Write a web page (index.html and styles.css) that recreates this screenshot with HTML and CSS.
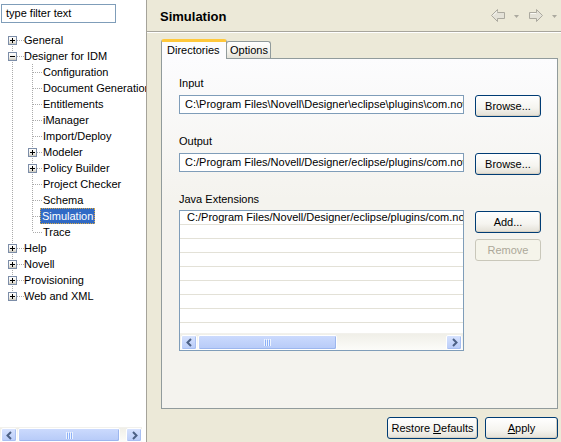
FILE: index.html
```html
<!DOCTYPE html>
<html>
<head>
<meta charset="utf-8">
<link rel="stylesheet" href="styles.css">
</head>
<body>
<div class="app">
  <div class="left">
    <div class="filter"><div class="filter-box">type filter text</div></div>
    <div class="tree">
      <div class="row"><span class="c c1 f"><svg class="exp" width="9" height="9" viewBox="0 0 9 9"><rect x="0.5" y="0.5" width="8" height="8" fill="url(#g)" stroke="#7C8DA8"/><rect x="2" y="4" width="5" height="1" fill="#000"/><rect x="4" y="2" width="1" height="5" fill="#000"/></svg></span><span class="txt">General</span></div>
      <div class="row"><span class="c c1 t"><svg class="exp" width="9" height="9" viewBox="0 0 9 9"><rect x="0.5" y="0.5" width="8" height="8" fill="url(#g)" stroke="#7C8DA8"/><rect x="2" y="4" width="5" height="1" fill="#000"/></svg></span><span class="txt">Designer for IDM</span></div>
      <div class="row"><span class="c c1 v"></span><span class="c c2 t"></span><span class="txt">Configuration</span></div>
      <div class="row"><span class="c c1 v"></span><span class="c c2 t"></span><span class="txt">Document Generation</span></div>
      <div class="row"><span class="c c1 v"></span><span class="c c2 t"></span><span class="txt">Entitlements</span></div>
      <div class="row"><span class="c c1 v"></span><span class="c c2 t"></span><span class="txt">iManager</span></div>
      <div class="row"><span class="c c1 v"></span><span class="c c2 t"></span><span class="txt">Import/Deploy</span></div>
      <div class="row"><span class="c c1 v"></span><span class="c c2 t"><svg class="exp" width="9" height="9" viewBox="0 0 9 9"><rect x="0.5" y="0.5" width="8" height="8" fill="url(#g)" stroke="#7C8DA8"/><rect x="2" y="4" width="5" height="1" fill="#000"/><rect x="4" y="2" width="1" height="5" fill="#000"/></svg></span><span class="txt">Modeler</span></div>
      <div class="row"><span class="c c1 v"></span><span class="c c2 t"><svg class="exp" width="9" height="9" viewBox="0 0 9 9"><rect x="0.5" y="0.5" width="8" height="8" fill="url(#g)" stroke="#7C8DA8"/><rect x="2" y="4" width="5" height="1" fill="#000"/><rect x="4" y="2" width="1" height="5" fill="#000"/></svg></span><span class="txt">Policy Builder</span></div>
      <div class="row"><span class="c c1 v"></span><span class="c c2 t"></span><span class="txt">Project Checker</span></div>
      <div class="row"><span class="c c1 v"></span><span class="c c2 t"></span><span class="txt">Schema</span></div>
      <div class="row"><span class="c c1 v"></span><span class="c c2 t"></span><span class="txt sel">Simulation</span></div>
      <div class="row"><span class="c c1 v"></span><span class="c c2 l"></span><span class="txt">Trace</span></div>
      <div class="row"><span class="c c1 t"><svg class="exp" width="9" height="9" viewBox="0 0 9 9"><rect x="0.5" y="0.5" width="8" height="8" fill="url(#g)" stroke="#7C8DA8"/><rect x="2" y="4" width="5" height="1" fill="#000"/><rect x="4" y="2" width="1" height="5" fill="#000"/></svg></span><span class="txt">Help</span></div>
      <div class="row"><span class="c c1 t"><svg class="exp" width="9" height="9" viewBox="0 0 9 9"><rect x="0.5" y="0.5" width="8" height="8" fill="url(#g)" stroke="#7C8DA8"/><rect x="2" y="4" width="5" height="1" fill="#000"/><rect x="4" y="2" width="1" height="5" fill="#000"/></svg></span><span class="txt">Novell</span></div>
      <div class="row"><span class="c c1 t"><svg class="exp" width="9" height="9" viewBox="0 0 9 9"><rect x="0.5" y="0.5" width="8" height="8" fill="url(#g)" stroke="#7C8DA8"/><rect x="2" y="4" width="5" height="1" fill="#000"/><rect x="4" y="2" width="1" height="5" fill="#000"/></svg></span><span class="txt">Provisioning</span></div>
      <div class="row"><span class="c c1 l"><svg class="exp" width="9" height="9" viewBox="0 0 9 9"><rect x="0.5" y="0.5" width="8" height="8" fill="url(#g)" stroke="#7C8DA8"/><rect x="2" y="4" width="5" height="1" fill="#000"/><rect x="4" y="2" width="1" height="5" fill="#000"/></svg></span><span class="txt">Web and XML</span></div>
    </div>
    <div class="hscroll left-sb">
      <div class="sb-btn"><svg width="9" height="9" viewBox="0 0 9 9"><path d="M6 1 L2.5 4.5 L6 8" fill="none" stroke="#4D6185" stroke-width="2"/></svg></div>
      <div class="sb-thumb lt"><svg width="7" height="7" viewBox="0 0 7 7"><g fill="#EEF4FE"><rect x="0" y="0" width="1" height="7"/><rect x="2" y="0" width="1" height="7"/><rect x="4" y="0" width="1" height="7"/><rect x="6" y="0" width="1" height="7"/></g><g fill="#8CB0F8"><rect x="1" y="1" width="1" height="6"/><rect x="3" y="1" width="1" height="6"/><rect x="5" y="1" width="1" height="6"/></g></svg></div>
      <div class="sb-track"></div>
      <div class="sb-btn"><svg width="9" height="9" viewBox="0 0 9 9"><path d="M3 1 L6.5 4.5 L3 8" fill="none" stroke="#4D6185" stroke-width="2"/></svg></div>
    </div>
  </div>

  <div class="right">
    <div class="header">
      <span class="title">Simulation</span>
      <div class="nav">
        <svg width="15" height="13" viewBox="0 0 15 13"><polygon points="0.5,6.5 6.5,0.5 6.5,3.5 13.5,3.5 13.5,9.5 6.5,9.5 6.5,12.5" fill="#E4E2D8" stroke="#ABA99F"/><polyline points="2,6.5 6,2.5 M7.5,4.5 12.5,4.5" fill="none" stroke="#FAFAF6"/></svg>
        <svg class="dd" width="5" height="3" viewBox="0 0 5 3"><polygon points="0,0 5,0 2.5,3" fill="#ABA99F"/></svg>
        <svg class="fwd" width="15" height="13" viewBox="0 0 15 13"><polygon points="14.5,6.5 8.5,0.5 8.5,3.5 1.5,3.5 1.5,9.5 8.5,9.5 8.5,12.5" fill="#E4E2D8" stroke="#ABA99F"/><polyline points="2.5,4.5 8,4.5" fill="none" stroke="#FAFAF6"/></svg>
        <svg class="dd" width="5" height="3" viewBox="0 0 5 3"><polygon points="0,0 5,0 2.5,3" fill="#ABA99F"/></svg>
      </div>
    </div>
    <div class="content">
      <div class="tabfolder">
        <div class="tabs">
          <div class="tab sel">Directories</div>
          <div class="tab">Options</div>
        </div>
        <div class="panel">
          <div class="label">Input</div>
          <div class="frow">
            <div class="field"><span>C:\Program Files\Novell\Designer\eclipse\plugins\com.nov</span></div>
            <div class="btn">Browse...</div>
          </div>
          <div class="label gap">Output</div>
          <div class="frow">
            <div class="field"><span>C:/Program Files/Novell/Designer/eclipse/plugins/com.nov</span></div>
            <div class="btn">Browse...</div>
          </div>
          <div class="label gap">Java Extensions</div>
          <div class="lrow">
            <div class="list">
              <div class="items">
                <div class="item"><span>C:/Program Files/Novell/Designer/eclipse/plugins/com.nov</span></div>
                <div class="item"></div><div class="item"></div><div class="item"></div><div class="item"></div>
                <div class="item"></div><div class="item"></div><div class="item"></div><div class="item"></div>
              </div>
              <div class="hscroll list-sb">
                <div class="sb-btn"><svg width="9" height="9" viewBox="0 0 9 9"><path d="M6 1 L2.5 4.5 L6 8" fill="none" stroke="#4D6185" stroke-width="2"/></svg></div>
                <div class="sb-thumb ls"><svg width="7" height="7" viewBox="0 0 7 7"><g fill="#EEF4FE"><rect x="0" y="0" width="1" height="7"/><rect x="2" y="0" width="1" height="7"/><rect x="4" y="0" width="1" height="7"/><rect x="6" y="0" width="1" height="7"/></g><g fill="#8CB0F8"><rect x="1" y="1" width="1" height="6"/><rect x="3" y="1" width="1" height="6"/><rect x="5" y="1" width="1" height="6"/></g></svg></div>
                <div class="sb-track"></div>
                <div class="sb-btn"><svg width="9" height="9" viewBox="0 0 9 9"><path d="M3 1 L6.5 4.5 L3 8" fill="none" stroke="#4D6185" stroke-width="2"/></svg></div>
              </div>
            </div>
            <div class="side">
              <div class="btn">Add...</div>
              <div class="btn disabled">Remove</div>
            </div>
          </div>
        </div>
      </div>
    </div>
    <div class="buttons">
      <div class="btn wide">Restore <u>D</u>efaults</div>
      <div class="btn apply"><u>A</u>pply</div>
    </div>
  </div>
</div>
<svg width="0" height="0" class="defs"><defs><linearGradient id="g" x1="0" y1="0" x2="0" y2="1"><stop offset="0" stop-color="#FFFFFF"/><stop offset="0.6" stop-color="#F0EFEA"/><stop offset="1" stop-color="#C6C2B4"/></linearGradient></defs></svg>
</body>
</html>
```
FILE: styles.css
```css
* { box-sizing: border-box; }
html, body { margin: 0; padding: 0; }
body {
  width: 561px;
  height: 442px;
  overflow: hidden;
  background: #ECE9D8;
  font-family: "Liberation Sans", Arial, sans-serif;
  font-size: 11px;
  color: #000;
}
.defs { display: block; width: 0; height: 0; }
.app { display: flex; width: 561px; height: 442px; }

/* left pane */
.left {
  width: 147px;
  flex: none;
  background: #fff;
  border-right: 1px solid #A5A39A;
  display: flex;
  flex-direction: column;
  overflow: hidden;
}
.filter { padding: 4px 0 0 1px; }
.filter-box {
  width: 115px;
  height: 19px;
  border: 1px solid #7F9DB9;
  padding-left: 4px;
  line-height: 17px;
  white-space: nowrap;
}
.tree { margin-top: 9px; flex: 1; }
.row { display: flex; height: 16px; align-items: center; white-space: nowrap; }
.txt { line-height: 16px; padding: 0 2px; }
.c1 + .txt { margin-left: -2px; }
.c2 + .txt { margin-left: -2px; }
.txt.sel {
  background: #316AC5;
  color: #fff;
  line-height: 14px;
  height: 16px;
  border: 1px dotted #D8A948;
  padding: 0 1px;
  margin-left: -3px;
}
.c {
  flex: none;
  height: 16px;
  display: flex;
  align-items: center;
  --vd: repeating-linear-gradient(to bottom, #ABABAB 0 1px, transparent 1px 2px);
  --hd: repeating-linear-gradient(to right, #ABABAB 0 1px, transparent 1px 2px);
  background-repeat: no-repeat;
}
.c1 { width: 24px; --cx: 12px; }
.c2 { width: 19px; --cx: 8px; }
.exp { flex: none; margin-left: calc(var(--cx) - 4px); display: block; }
.v {
  background-image: var(--vd);
  background-size: 1px 16px;
  background-position: var(--cx) 0;
}
.t {
  background-image: var(--vd), var(--hd);
  background-size: 1px 16px, calc(100% - var(--cx) - 1px) 1px;
  background-position: var(--cx) 0, calc(var(--cx) + 1px) 8px;
}
.l {
  background-image: var(--vd), var(--hd);
  background-size: 1px 8px, calc(100% - var(--cx) - 1px) 1px;
  background-position: var(--cx) 0, calc(var(--cx) + 1px) 8px;
}
.f {
  background-image: var(--vd), var(--hd);
  background-size: 1px 8px, calc(100% - var(--cx) - 1px) 1px;
  background-position: var(--cx) 8px, calc(var(--cx) + 1px) 8px;
}

/* scrollbars */
.hscroll {
  display: flex;
  align-items: stretch;
  background: linear-gradient(to bottom, #F0EFE8, #FCFCF9);
  border-top: 1px solid #F2F1EC;
  flex: none;
}
.left-sb { height: 15px; margin-right: 4px; padding-left: 1px; }
.list-sb { height: 17px; padding: 1px 1px 0 1px; }
.sb-btn {
  width: 16px;
  flex: none;
  border: 1px solid #fff;
  border-radius: 2px;
  background: linear-gradient(to bottom, #D6E2FE, #B9CCF8);
  display: flex;
  align-items: center;
  justify-content: center;
  box-shadow: inset -1px -1px 0 #A8BFF2;
}
.sb-thumb {
  flex: none;
  margin-left: 1px;
  border: 1px solid #fff;
  border-radius: 2px;
  background: linear-gradient(to bottom, #CBDAFD, #B6CAF8);
  box-shadow: inset -1px -1px 0 #9CB6EE;
  display: flex;
  align-items: center;
  justify-content: center;
}
.sb-thumb.lt { width: 102px; }
.sb-thumb.ls { width: 139px; }
.sb-track { flex: 1; }

/* right pane */
.right { flex: 1; display: flex; flex-direction: column; min-width: 0; }
.header {
  height: 32px;
  flex: none;
  display: flex;
  align-items: center;
  border-bottom: 1px solid #A7A59C;
  box-shadow: 0 1px 0 #FFFFFF;
  padding: 1px 4px 0 13px;
}
.title { font-size: 13px; font-weight: bold; flex: 1; }
.nav { display: flex; align-items: center; margin-top: -2px; }
.nav svg { display: block; }
.nav .dd { margin: 2px 9px 0 8px; }
.nav .dd:last-child { margin-right: 0; margin-left: 9px; }
.content { flex: 1; padding: 7px 3px 0 14px; display: flex; flex-direction: column; }
.tabfolder { flex: 1; display: flex; flex-direction: column; }
.tabs {
  height: 20px;
  display: flex;
  align-items: flex-end;
  margin-bottom: -1px;
  position: relative;
}
.tab {
  height: 17px;
  margin-bottom: 1px;
  border: 1px solid #919B9C;
  border-bottom: none;
  border-radius: 3px 3px 0 0;
  background: linear-gradient(to bottom, #FFFFFF, #F3F2EC 60%, #E4E2D8);
  padding: 1px 3px 0 3px;
  line-height: 15px;
  white-space: nowrap;
}
.tab.sel {
  height: 20px;
  margin-bottom: 0;
  width: 66px;
  background: #FCFCFE;
  border-top: 3px solid #FFC83C;
  padding: 0 0 0 5px;
  line-height: 16px;
}
.tab:not(.sel) { width: 45px; margin-left: -1px; }
.panel {
  flex: 1;
  border: 1px solid #919B9C;
  background: linear-gradient(to bottom, #FCFCFE 0, #F4F3EE 140px, #F4F3EE 100%);
  padding: 17px 0 0 17px;
}
.label { height: 14px; line-height: 14px; }
.label.gap { margin-top: 17px; }
.frow { display: flex; align-items: flex-start; gap: 11px; margin-top: 5px; height: 22px; }
.field {
  width: 285px;
  height: 19px;
  flex: none;
  background: #fff;
  border: 1px solid #7F9DB9;
  padding-left: 5px;
  line-height: 17px;
  white-space: nowrap;
  overflow: hidden;
}
.btn {
  width: 66px;
  height: 22px;
  flex: none;
  border: 1px solid #003C74;
  border-radius: 3px;
  background: linear-gradient(to bottom, #FFFFFF 0, #F5F4EF 60%, #E3E0D6 100%);
  box-shadow: inset -1px -1px 0 #D6D0C3;
  text-align: center;
  line-height: 20px;
  white-space: nowrap;
}
.btn.disabled {
  border-color: #C9C7BA;
  color: #ACA899;
  background: #F5F4EA;
  box-shadow: none;
}
.btn u { text-decoration: underline; text-underline-offset: 1px; }
.lrow { display: flex; gap: 11px; margin-top: 4px; align-items: flex-start; }
.list {
  width: 285px;
  height: 141px;
  flex: none;
  background: #fff;
  border: 1px solid #7F9DB9;
  display: flex;
  flex-direction: column;
}
.items { flex: 1; overflow: hidden; }
.item {
  height: 14px;
  border-bottom: 1px solid #E3E1D7;
  padding-left: 7px;
  line-height: 13px;
  white-space: nowrap;
  overflow: hidden;
}
.side { display: flex; flex-direction: column; gap: 6px; margin-top: 1px; }
.buttons {
  height: 33px;
  flex: none;
  display: flex;
  justify-content: flex-end;
  align-items: flex-start;
  gap: 7px;
  padding: 8px 3px 0 0;
}
.btn.wide { width: 91px; }
.btn.apply { width: 73px; }
```
